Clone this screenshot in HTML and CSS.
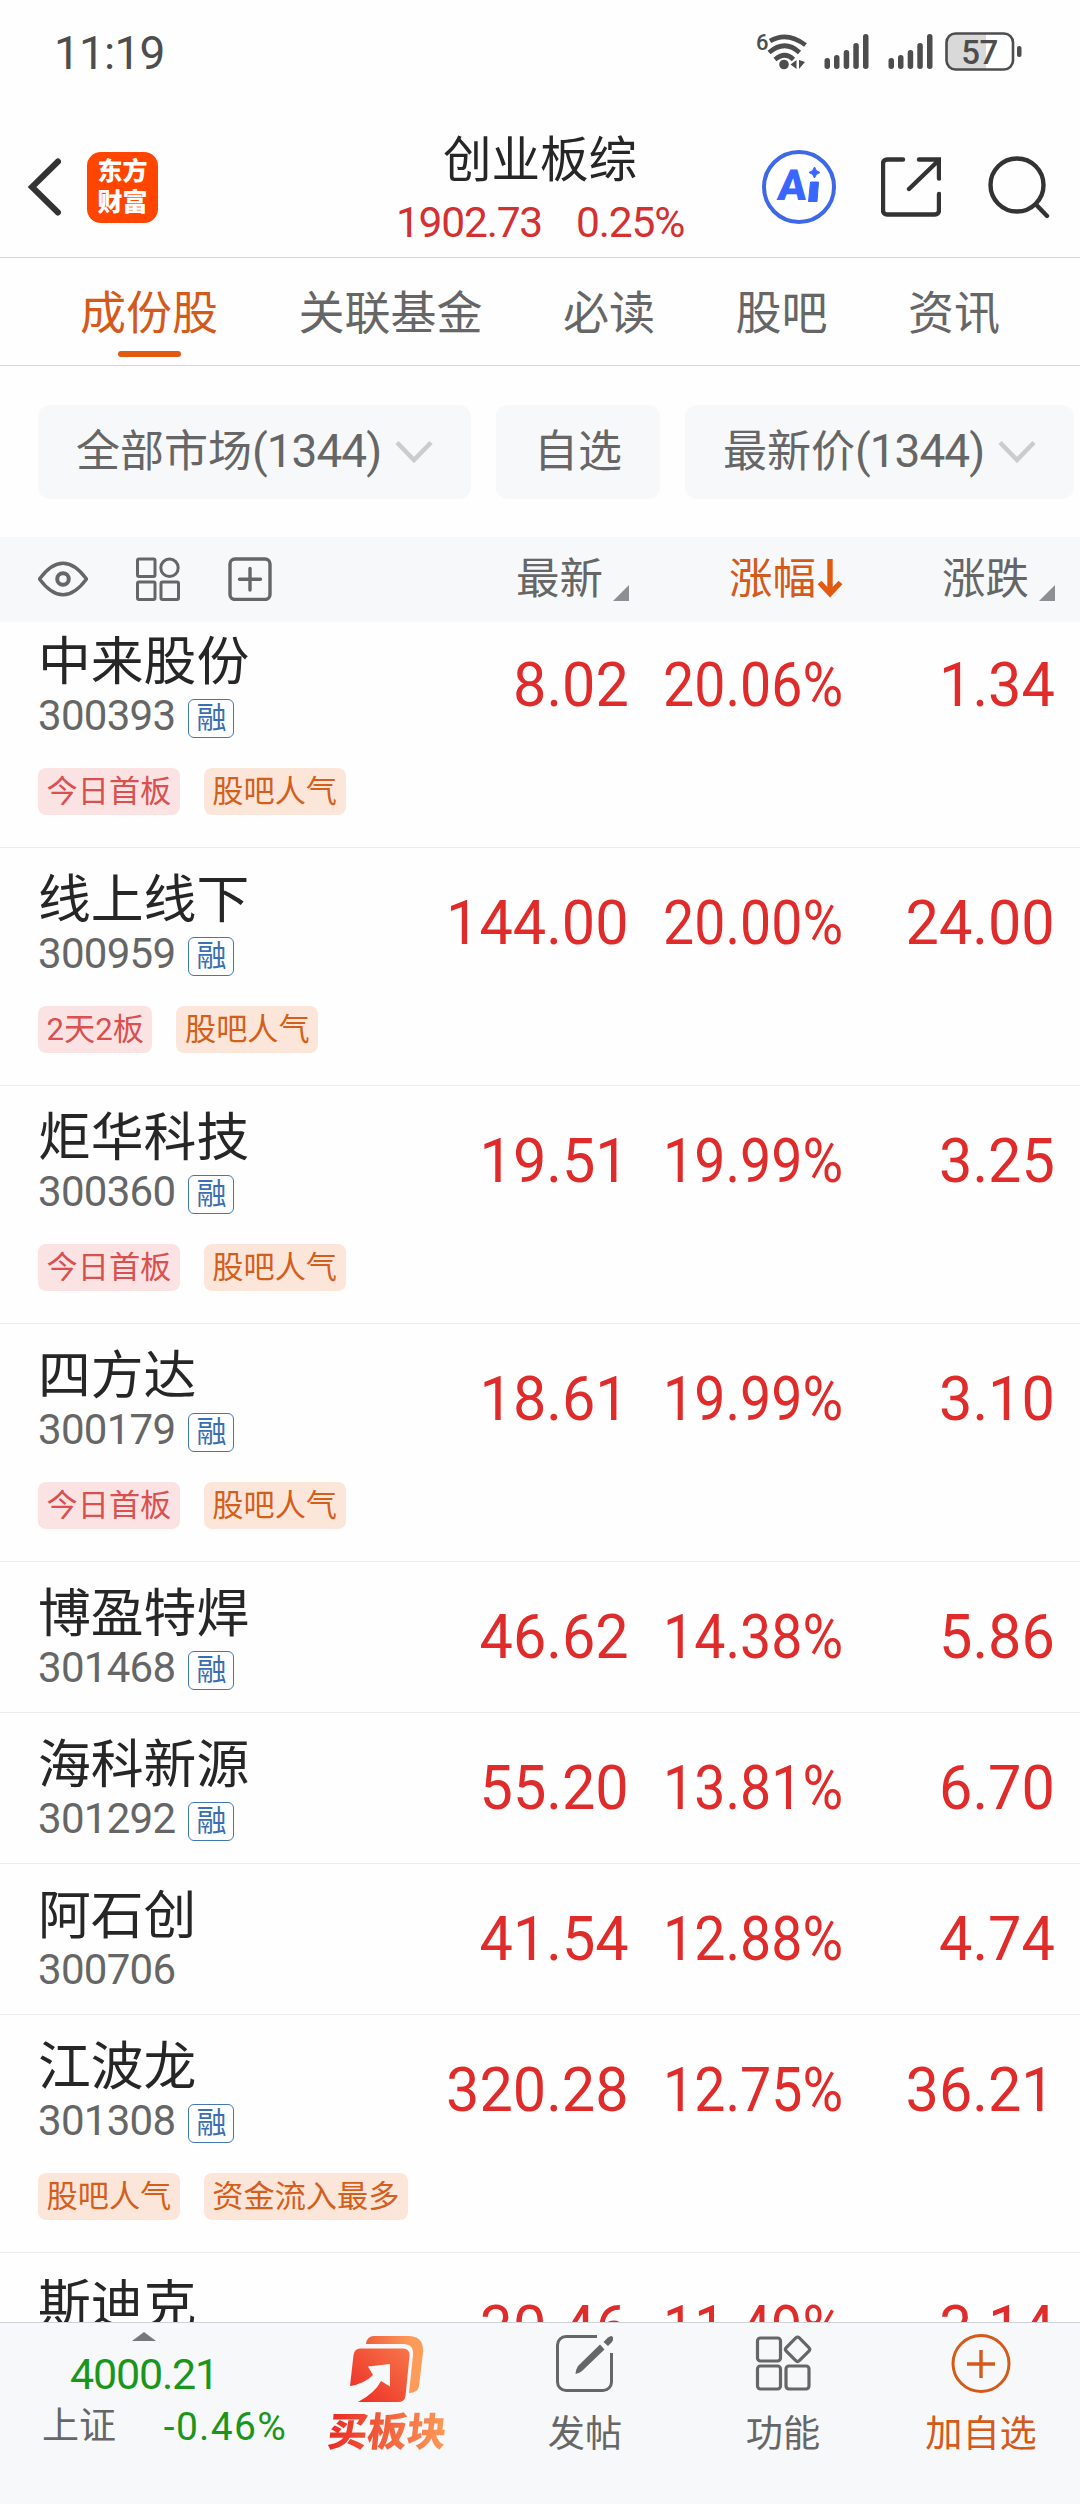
FILE: index.html
```html
<!DOCTYPE html>
<html lang="zh-CN">
  <head>
    <meta charset="UTF-8" />
    <title>创业板综</title>
    <link rel="stylesheet" href="styles.css">
  </head>
  <body>
    <div class="status-bar">
      <span class="time">11:19</span>
      <svg class="status-icons" width="270" height="44" viewBox="755 30 270 44">
        <text x="756" y="49.500" class="wifi-gen">6</text>
        <g fill="none" stroke="#4d4d4d" stroke-width="4.600">
          <path d="M770 41Q787 31 805.500 45" />
          <path d="M769 52.500Q785 39 799.500 52.500" />
          <path d="M775 59.500Q785 51 793.500 59.500" />
        </g>
        <g fill="#4d4d4d">
          <circle cx="784" cy="64.500" r="4.800" />
          <path d="M796.500 60v9l-6-4.500zM799 60l6 2-6 7z" />
          <rect x="824.500" y="58" width="5.500" height="11" rx="2.700" />
          <rect x="834" y="55" width="5.500" height="14" rx="2.700" />
          <rect x="843.700" y="50" width="5.500" height="19" rx="2.700" />
          <rect x="853.300" y="43" width="5.500" height="26" rx="2.700" />
          <rect x="863" y="34" width="5.500" height="35" rx="2.700" />
          <rect x="888.500" y="58" width="5.500" height="11" rx="2.700" />
          <rect x="898" y="55" width="5.500" height="14" rx="2.700" />
          <rect x="907.700" y="50" width="5.500" height="19" rx="2.700" />
          <rect x="917.300" y="43" width="5.500" height="26" rx="2.700" />
          <rect x="927" y="34" width="5.500" height="35" rx="2.700" />
          <rect x="1017" y="46" width="4.500" height="11" rx="2" />
        </g>
        <path d="M986 34h-30a9 9 0 0 0-9 9v17a9 9 0 0 0 9 9h30z" fill="#d9d9d9" />
        <rect x="946.500" y="33.500" width="66.500" height="36" rx="9" fill="none" stroke="#4d4d4d" stroke-width="2.600" />
        <text x="979.500" y="64" class="battery-num">57</text>
      </svg>
    </div>

    <header class="header">
      <div class="header-left">
        <svg width="34" height="60" viewBox="0 0 34 60">
          <path d="M31 4.500 5 30 31 55.500" fill="none" stroke="#333" stroke-width="6" stroke-linecap="round" />
        </svg>
        <div class="logo">东方<br />财富</div>
      </div>
      <div class="header-title">
        <h1>创业板综</h1>
        <p><span>1902.73</span><span>0.25%</span></p>
      </div>
      <div class="header-right">
        <svg width="76" height="76" viewBox="0 0 76 76">
          <circle cx="38" cy="38" r="35" fill="#fff" stroke="#3d69e8" stroke-width="4" />
          <text x="20" y="51" class="ai-text" transform="skewX(-5)">A</text>
          <path d="M49.500 33h8l-1.500 19.500h-8.500zM53.500 18l1.800 3.500 3.700 2-3.700 2-1.800 3.500-1.800-3.500-3.700-2 3.700-2z" fill="#3966ff" stroke="#3966ff" stroke-linejoin="round" />
        </svg>
        <svg width="60" height="60" viewBox="0 0 60 60" fill="none" stroke="#333" stroke-width="4.400" stroke-linecap="round">
          <path d="M22 2.500H6a4 4 0 0 0-4 4V53.500a4 4 0 0 0 4 4H54a4 4 0 0 0 4-4V37M38 2.500H58V21.500M57 4 28 32" />
        </svg>
        <svg width="62" height="64" viewBox="0 0 62 64" fill="none" stroke="#333" stroke-width="4.400" stroke-linecap="round">
          <circle cx="29" cy="30" r="26.500" />
          <path d="M48 49.500 59 61" />
        </svg>
      </div>
    </header>

    <nav class="tabs">
      <span class="tab active">成份股</span>
      <span class="tab">关联基金</span>
      <span class="tab">必读</span>
      <span class="tab">股吧</span>
      <span class="tab">资讯</span>
    </nav>

    <div class="filters">
      <div class="filter filter-market">
        <span>全部市场<i>(1344)</i></span>
        <svg width="38" height="24" viewBox="0 0 38 24"><path d="M2 2.500 19 20 36 2.500" fill="none" stroke="#ccc" stroke-width="4.500" /></svg>
      </div>
      <div class="filter">自选</div>
      <div class="filter filter-price">
        <span>最新价<i>(1344)</i></span>
        <svg width="38" height="24" viewBox="0 0 38 24"><path d="M2 2.500 19 20 36 2.500" fill="none" stroke="#ccc" stroke-width="4.500" /></svg>
      </div>
    </div>

    <div class="list-head">
      <div class="head-icons">
        <svg width="50" height="44" viewBox="0 0 50 44" fill="none" stroke="#666" stroke-width="3.400">
          <path d="M1.500 22C17 1 33 1 48.500 22 33 43 17 43 1.500 22z" stroke-linejoin="round" />
          <circle cx="25" cy="22" r="5.800" stroke-width="4" />
        </svg>
        <svg width="44" height="44" viewBox="0 0 44 44" fill="none" stroke="#666" stroke-width="3">
          <rect x="1.500" y="2" width="17.500" height="17.500" rx="1.500" />
          <circle cx="33.500" cy="10.800" r="8.700" />
          <rect x="1.500" y="25" width="17.500" height="17.500" rx="1.500" />
          <rect x="25" y="25" width="17.500" height="17.500" rx="1.500" />
        </svg>
        <svg width="44" height="44" viewBox="0 0 44 44" fill="none" stroke="#666" stroke-width="3.400">
          <rect x="2" y="2" width="40" height="40.500" rx="5" />
          <path d="M22 11.500v21.500M11.500 22.200h21" stroke-linecap="round" />
        </svg>
      </div>
      <div class="col price sortable">最新<b class="corner"></b></div>
      <div class="col percent sorted">涨幅<svg width="26" height="40" viewBox="0 0 26 40" fill="none" stroke="#e35a0e" stroke-width="5.400"><path d="M13 1v34M2.500 24.500 13 35.500 23.500 24.500" /></svg></div>
      <div class="col change sortable">涨跌<b class="corner"></b></div>
    </div>

    <main class="list">
      <div class="row">
        <div class="stock">
          <p class="name">中来股份</p>
          <p class="code">300393<em>融</em></p>
          <p class="tags"><span class="tag red">今日首板</span><span class="tag orange">股吧人气</span></p>
        </div>
        <div class="col price"><span>8.02</span></div>
        <div class="col percent"><span>20.06%</span></div>
        <div class="col change"><span>1.34</span></div>
      </div>
      <div class="row">
        <div class="stock">
          <p class="name">线上线下</p>
          <p class="code">300959<em>融</em></p>
          <p class="tags"><span class="tag red">2天2板</span><span class="tag orange">股吧人气</span></p>
        </div>
        <div class="col price"><span>144.00</span></div>
        <div class="col percent"><span>20.00%</span></div>
        <div class="col change"><span>24.00</span></div>
      </div>
      <div class="row">
        <div class="stock">
          <p class="name">炬华科技</p>
          <p class="code">300360<em>融</em></p>
          <p class="tags"><span class="tag red">今日首板</span><span class="tag orange">股吧人气</span></p>
        </div>
        <div class="col price"><span>19.51</span></div>
        <div class="col percent"><span>19.99%</span></div>
        <div class="col change"><span>3.25</span></div>
      </div>
      <div class="row">
        <div class="stock">
          <p class="name">四方达</p>
          <p class="code">300179<em>融</em></p>
          <p class="tags"><span class="tag red">今日首板</span><span class="tag orange">股吧人气</span></p>
        </div>
        <div class="col price"><span>18.61</span></div>
        <div class="col percent"><span>19.99%</span></div>
        <div class="col change"><span>3.10</span></div>
      </div>
      <div class="row">
        <div class="stock">
          <p class="name">博盈特焊</p>
          <p class="code">301468<em>融</em></p>
        </div>
        <div class="col price"><span>46.62</span></div>
        <div class="col percent"><span>14.38%</span></div>
        <div class="col change"><span>5.86</span></div>
      </div>
      <div class="row">
        <div class="stock">
          <p class="name">海科新源</p>
          <p class="code">301292<em>融</em></p>
        </div>
        <div class="col price"><span>55.20</span></div>
        <div class="col percent"><span>13.81%</span></div>
        <div class="col change"><span>6.70</span></div>
      </div>
      <div class="row">
        <div class="stock">
          <p class="name">阿石创</p>
          <p class="code">300706</p>
        </div>
        <div class="col price"><span>41.54</span></div>
        <div class="col percent"><span>12.88%</span></div>
        <div class="col change"><span>4.74</span></div>
      </div>
      <div class="row">
        <div class="stock">
          <p class="name">江波龙</p>
          <p class="code">301308<em>融</em></p>
          <p class="tags"><span class="tag orange">股吧人气</span><span class="tag orange">资金流入最多</span></p>
        </div>
        <div class="col price"><span>320.28</span></div>
        <div class="col percent"><span>12.75%</span></div>
        <div class="col change"><span>36.21</span></div>
      </div>
      <div class="row">
        <div class="stock">
          <p class="name">斯迪克</p>
        </div>
        <div class="col price"><span>30.46</span></div>
        <div class="col percent"><span>11.49%</span></div>
        <div class="col change"><span>3.14</span></div>
      </div>
    </main>

    <footer class="bottom-bar">
      <div class="index-box">
        <svg width="24" height="9" viewBox="0 0 24 9"><path d="M0 9 12 0 24 9z" fill="#77777b" /></svg>
        <p class="index-value">4000.21</p>
        <p class="index-row"><span>上证</span><span class="index-change">-0.46%</span></p>
      </div>
      <div class="action buy">
        <svg width="76" height="70" viewBox="0 0 76 70">
          <defs>
            <linearGradient id="front" x1="0" y1="1" x2="1" y2="0">
              <stop offset="0" stop-color="#ec2a24" />
              <stop offset="1" stop-color="#f7774a" />
            </linearGradient>
            <linearGradient id="back" x1="0" y1="0" x2="1" y2="0">
              <stop offset="0" stop-color="#ef5f3e" />
              <stop offset=".8" stop-color="#fd9b58" />
            </linearGradient>
          </defs>
          <path d="M17 9Q18 1 25 1H59Q75 1 74 17L70 51Q69 58 60 58L64 20Q65 9 54 9z" fill="url(#back)" />
          <path d="M11 13.500H54Q61 13.500 60.500 21L56.500 61Q55.500 67 49 67H9Q26 58 32 46L41 51.500V29L19 31.500 24 40Q15 49 1 51L4.500 20Q5.500 13.500 11 13.500z" fill="url(#front)" />
        </svg>
        <span>买板块</span>
      </div>
      <div class="action">
        <svg width="60" height="60" viewBox="0 0 60 60">
          <path d="M42 3.500H11a8.500 8.500 0 0 0-8.500 8.500V49A8.500 8.500 0 0 0 11 57.500H48A8.500 8.500 0 0 0 56.500 49V20" fill="none" stroke="#666" stroke-width="3" />
          <path d="M45 11.500 49.500 16.500 27 38Q25 40 20.500 41 21 36 23 33z" fill="#666" />
          <path d="M48.500 9 53 4.500Q57 1.500 58 4.500 58.500 7 57 9L53 13z" fill="#666" />
        </svg>
        <span>发帖</span>
      </div>
      <div class="action">
        <svg width="60" height="60" viewBox="0 0 60 60" fill="none" stroke="#666" stroke-width="3.200">
          <rect x="4.500" y="5" width="23" height="23" rx="3" />
          <rect x="4.500" y="33" width="23" height="23" rx="3" />
          <rect x="33" y="33" width="23" height="23" rx="3" />
          <rect x="35.300" y="7" width="18.500" height="18.500" rx="2.500" transform="rotate(45 44.500 16.300)" />
        </svg>
        <span>功能</span>
      </div>
      <div class="action add">
        <svg width="60" height="60" viewBox="0 0 60 60" fill="none" stroke="#d45a1a" stroke-width="3">
          <circle cx="30" cy="30.500" r="28" />
          <path d="M30 17v28M16 31h28" stroke-width="3.400" />
        </svg>
        <span>加自选</span>
      </div>
    </footer>
  </body>
</html>
```

FILE: styles.css
```css
* {
  box-sizing: border-box;
  margin: 0;
  padding: 0;
}

body {
  width: 1080px;
  height: 2504px;
  display: flex;
  flex-direction: column;
  background: #fefefe;
  color: #666;
  font-family: Roboto, "Noto Sans CJK SC", sans-serif;
  overflow: hidden;
}

svg {
  display: block;
  flex-shrink: 0;
}

i,
em {
  font-style: normal;
}

/* status bar */
.status-bar {
  height: 117px;
  padding: 30px 55px 0 54px;
  display: flex;
  justify-content: space-between;
  color: #4d4d4d;
}

.time {
  font-size: 46px;
  line-height: 47px;
  letter-spacing: -0.8px;
}

.wifi-gen {
  font-size: 22px;
  font-weight: 500;
  fill: #4d4d4d;
}

.battery-num {
  font-size: 33px;
  font-weight: 500;
  fill: #4d4d4d;
  text-anchor: middle;
  letter-spacing: -0.5px;
}

/* header */
.header {
  height: 141px;
  display: grid;
  grid-template-columns: 1fr auto 1fr;
  align-items: center;
  border-bottom: 1px solid #d6d6d6;
}

.header-left {
  display: flex;
  align-items: center;
  gap: 26px;
  padding-left: 27px;
}

.logo {
  width: 71px;
  height: 71px;
  padding-top: 4px;
  border-radius: 14px;
  background: #ff4500;
  color: #fff;
  font-size: 25px;
  font-weight: 900;
  line-height: 31px;
  text-align: center;
}

.header-title {
  padding-top: 7px;
  text-align: center;
}

.header-title h1 {
  font-size: 48.5px;
  font-weight: 400;
  line-height: 64px;
  color: #262626;
}

.header-title p {
  display: flex;
  gap: 34px;
  font-size: 42.5px;
  line-height: 60px;
  letter-spacing: -1.2px;
  color: #d43030;
}

.header-right {
  display: flex;
  align-items: center;
  justify-content: flex-end;
  gap: 47px;
  padding-right: 30px;
}

.header-right svg:first-child {
  margin-right: -3px;
}

.ai-text {
  font-size: 43px;
  font-weight: 900;
  fill: #3966ff;
}

/* tabs */
.tabs {
  height: 108px;
  display: flex;
  gap: 80.5px;
  padding-left: 80px;
  border-bottom: 1px solid #d6d6d6;
  font-size: 46px;
  line-height: 111px;
}

.tab.active {
  color: #d45a1a;
  position: relative;
}

.tab.active::after {
  content: "";
  position: absolute;
  left: 38px;
  bottom: 8px;
  width: 63px;
  height: 6px;
  border-radius: 3px;
  background: #e05a12;
}

/* filters */
.filters {
  display: flex;
  gap: 25px;
  padding: 39px 0 38px 38px;
}

.filter {
  height: 94px;
  display: flex;
  align-items: center;
  gap: 14px;
  padding: 0 38px;
  border-radius: 12px;
  background: #f7f8fa;
  font-size: 44px;
  line-height: 97px;
  white-space: nowrap;
}

.filter i {
  font-size: 46px;
  letter-spacing: -1px;
}

.filter-market {
  width: 433px;
}

.filter-price {
  width: 389px;
}

/* list */
.list-head {
  position: relative;
  z-index: 1;
  height: 85px;
  flex-shrink: 0;
  display: flex;
  align-items: center;
  background: #f7f8fa;
  font-size: 43.5px;
}

.head-icons {
  width: 402px;
  display: flex;
  align-items: center;
  gap: 48px;
  padding: 0 0 2px 38px;
}

.col {
  display: flex;
  justify-content: flex-end;
}

.price {
  width: 228px;
}

.percent {
  width: 213px;
}

.change {
  width: 213px;
}

.list-head .col {
  align-items: center;
  line-height: 85px;
}

.list-head .sortable {
  padding-right: 1px;
  gap: 10px;
}

.sorted {
  color: #d45a1a;
}

.sorted svg {
  margin: 0 0 3px 1px;
}

.corner {
  width: 16px;
  height: 16px;
  margin-top: 27px;
  background: #8e8e93;
  clip-path: polygon(100% 0, 100% 100%, 0 100%);
}

.list {
  flex: 1;
  min-height: 0;
  margin-top: -12px;
  overflow: hidden;
}

.row {
  display: flex;
  border-bottom: 1px solid #ebebeb;
}

.row .col {
  padding: 38px 1px 0 0;
  font-size: 62px;
  line-height: 73px;
  color: #e02b2b;
}

.row .col span {
  transform: scaleX(0.958);
  transform-origin: right;
}

.row .percent {
  padding-right: 0;
}

.row .percent span {
  transform: scaleX(0.895);
}

.stock {
  width: 402px;
  padding: 22px 0 22px 38px;
}

.name {
  font-size: 52.8px;
  line-height: 60px;
  color: #262626;
}

.code {
  display: flex;
  align-items: center;
  height: 47px;
  font-size: 42px;
  line-height: 47px;
  letter-spacing: -0.7px;
}

.code em {
  width: 46px;
  height: 39px;
  margin: 5px 0 0 13px;
  border: 1px solid #4078b4;
  border-radius: 6px;
  color: #3a6fb0;
  font-size: 30px;
  line-height: 36px;
  letter-spacing: 0;
  text-align: center;
}

.tags {
  display: flex;
  gap: 24px;
  margin: 29px 0 10px;
  white-space: nowrap;
}

.row:not(:has(.tags)) .stock {
  padding-bottom: 21px;
}

.tag {
  height: 47px;
  padding: 0 8.5px;
  border-radius: 8px;
  font-size: 31.2px;
  line-height: 48px;
}

.red {
  background: #fbe3e4;
  color: #d9504f;
}

.orange {
  background: #fce6d9;
  color: #d45f1c;
}

/* bottom bar */
.bottom-bar {
  position: relative;
  height: 182px;
  flex-shrink: 0;
  display: flex;
  border-top: 1px solid #cfd3d8;
  background: #f7f8fa;
}

.index-box {
  width: 288px;
  padding-top: 9px;
  display: flex;
  flex-direction: column;
  align-items: center;
}

.index-value {
  margin-top: 8px;
  font-size: 43px;
  line-height: 50px;
  letter-spacing: -1.2px;
  color: #1a961a;
}

.index-row {
  width: 100%;
  display: flex;
  justify-content: space-between;
  padding: 0 1px 0 42px;
  font-size: 37px;
  line-height: 56px;
}

.index-change {
  font-size: 39px;
  letter-spacing: 1.3px;
  color: #1a961a;
}

.action {
  width: 198px;
  padding-top: 10px;
  display: flex;
  flex-direction: column;
  align-items: center;
  font-size: 37.2px;
  line-height: 82px;
}

.buy svg {
  margin-top: 2px;
}

.buy span {
  font-size: 39.5px;
  font-weight: 900;
  line-height: 55px;
  transform: skewX(-6deg);
  background: linear-gradient(90deg, #ea2a24, #fd9b58);
  -webkit-background-clip: text;
  color: transparent;
}

.add {
  color: #d45a1a;
}
```
